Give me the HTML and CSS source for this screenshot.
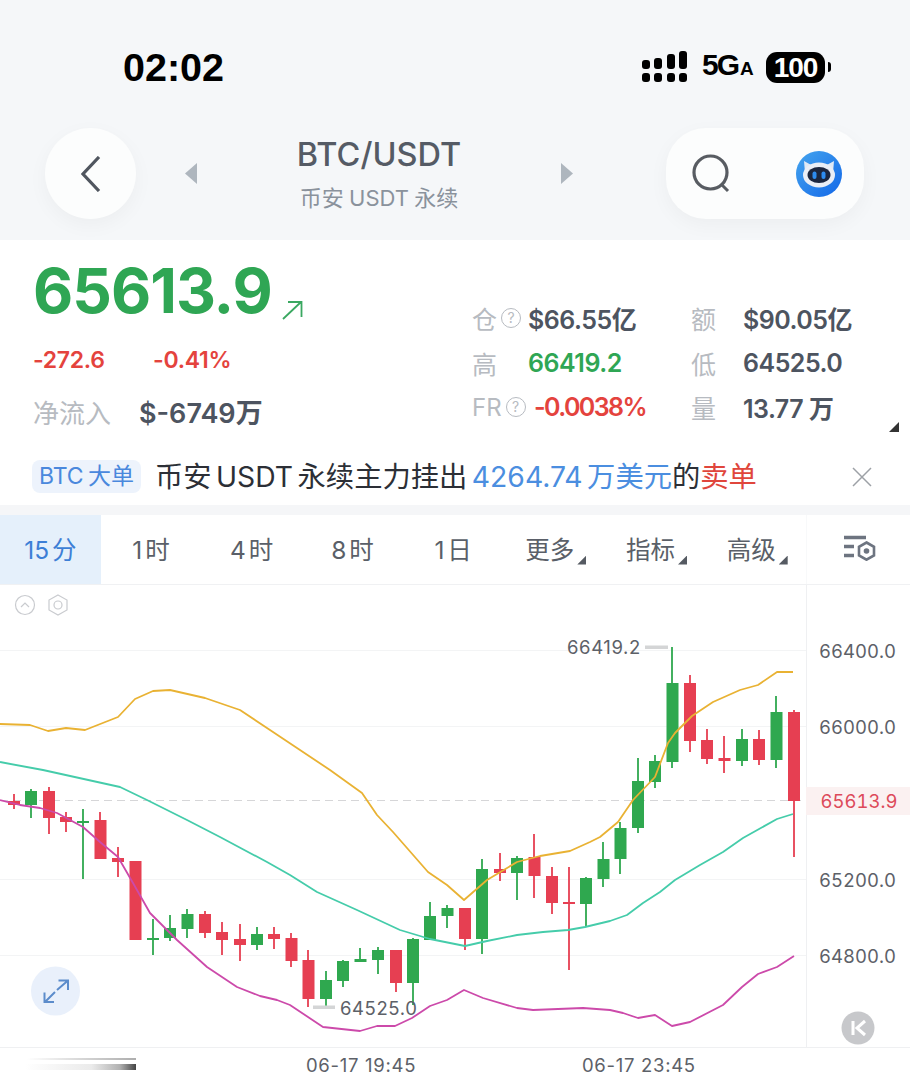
FILE: index.html
```html
<!DOCTYPE html>
<html lang="en">
<head>
    <meta charset="UTF-8">
    <meta name="viewport" content="width=device-width, initial-scale=1.0">
    <title>BTC/USDT</title>
    <link rel="stylesheet" href="styles.css">
</head>
<body>
    <header class="top">
        <div class="status">
            <span class="clock">02:02</span>
            <div class="status-right">
                <svg class="signal" width="46" height="32" viewBox="0 0 46 32">
                    <rect x="0" y="9" width="8" height="9" rx="3"/><rect x="12" y="7" width="8" height="11" rx="3"/><rect x="25" y="3" width="8" height="15" rx="3"/><rect x="37" y="0" width="8" height="18" rx="3"/>
                    <rect x="0" y="22" width="8" height="9" rx="3"/><rect x="12" y="22" width="8" height="9" rx="3"/><rect x="25" y="22" width="8" height="9" rx="3"/><rect x="37" y="22" width="8" height="9" rx="3"/>
                </svg>
                <span class="net">5G<small>A</small></span>
                <span class="battery">100</span>
                <span class="battery-nub"></span>
            </div>
        </div>
        <nav class="nav">
            <button class="round-btn">
                <svg width="20" height="36" viewBox="0 0 20 36"><path d="M18 1 2 18l16 17" fill="none" stroke="#50565f" stroke-width="3.200"/></svg>
            </button>
            <div class="pair">
                <span class="tri tri-left"></span>
                <div class="pair-name">
                    <div class="pair-title">BTC/USDT</div>
                    <div class="pair-sub">币安 USDT 永续</div>
                </div>
                <span class="tri tri-right"></span>
            </div>
            <div class="pill">
                <svg width="40" height="40" viewBox="0 0 40 40"><circle cx="18.5" cy="18.5" r="16.500" fill="none" stroke="#585c62" stroke-width="3.200"/><path d="M29 30l7 7" stroke="#585c62" stroke-width="3"/></svg>
                <svg width="46" height="46" viewBox="0 0 46 46">
                    <defs><linearGradient id="bot" x1="0" y1="0" x2="1" y2="1"><stop offset="0" stop-color="#45a5ee"/><stop offset="1" stop-color="#1267e8"/></linearGradient></defs>
                    <circle cx="23" cy="23" r="23" fill="url(#bot)"/>
                    <path d="M8 10l9 5h12l9-5-1 12H9z" fill="#dfe9f5"/>
                    <ellipse cx="23" cy="24" rx="16" ry="12.500" fill="#e9eef6"/>
                    <ellipse cx="23" cy="24" rx="11.500" ry="8" fill="#1c2740"/>
                    <rect x="16.500" y="20.500" width="4" height="7.500" rx="2" fill="#2d8cf0"/><rect x="25.500" y="20.500" width="4" height="7.500" rx="2" fill="#2d8cf0"/>
                </svg>
            </div>
        </nav>
    </header>

    <section class="quote">
        <div class="quote-left">
            <div class="price-row">
                <span class="price">65613.9</span>
                <svg class="price-arrow" width="21" height="20" viewBox="0 0 21 20"><path d="M1 19 19 2M6 2h13.500v15" fill="none" stroke="#3aa861" stroke-width="1.800"/></svg>
            </div>
            <div class="change"><span class="change-abs">-272.6</span><span>-0.41%</span></div>
            <div class="flow"><span class="flow-label">净流入</span><span class="flow-value">$-6749万</span></div>
        </div>
        <div class="stats">
            <span class="stat-label">仓<i class="help">?</i></span><span class="stat-value">$66.55亿</span>
            <span class="stat-label">额</span><span class="stat-value">$90.05亿</span>
            <span class="stat-label">高</span><span class="stat-value up">66419.2</span>
            <span class="stat-label">低</span><span class="stat-value">64525.0</span>
            <span class="stat-label fr">FR<i class="help">?</i></span><span class="stat-value down fr-value">-0.0038%</span>
            <span class="stat-label">量</span><span class="stat-value">13.77 万</span>
        </div>
        <span class="corner corner-quote"></span>
    </section>

    <div class="notice">
        <span class="notice-tag">BTC 大单</span>
        <p class="notice-text">币安 USDT 永续主力挂出 <em class="blue">4264.74 万美元</em>的<em class="red">卖单</em></p>
        <svg class="notice-close" width="22" height="22" viewBox="0 0 22 22"><path d="M2 2l18 18M20 2 2 20" stroke="#9da1a6" stroke-width="1.500"/></svg>
    </div>

    <div class="tabs">
        <span class="tab active">15 分</span>
        <span class="tab">1 时</span>
        <span class="tab">4 时</span>
        <span class="tab">8 时</span>
        <span class="tab">1 日</span>
        <span class="tab tab-menu">更多<span class="corner"></span></span>
        <span class="tab tab-menu">指标<span class="corner"></span></span>
        <span class="tab tab-menu">高级<span class="corner"></span></span>
        <span class="tab tab-icon">
            <svg width="32" height="26" viewBox="0 0 32 26">
                <path d="M0 2.500h22M0 11.500h10M0 20.500h10" stroke="#6d7480" stroke-width="3.400"/>
                <path d="M22.500 7.500l7.500 4.300v8.600l-7.500 4.300-7.500-4.300v-8.600z" fill="none" stroke="#6d7480" stroke-width="2.600"/>
                <circle cx="22.500" cy="16" r="2.800" fill="#6d7480"/>
            </svg>
        </span>
    </div>

    <svg class="chart" width="910" height="495" viewBox="0 585 910 495">
        <defs>
            <linearGradient id="smudge" x1="0" x2="1" y1="0" y2="0">
                <stop offset="0" stop-color="#555" stop-opacity="0"/>
                <stop offset="0.6" stop-color="#555" stop-opacity="0.12"/>
                <stop offset="0.85" stop-color="#555" stop-opacity="0.45"/>
                <stop offset="1" stop-color="#444"/>
            </linearGradient>
            <linearGradient id="smudge-thin" x1="0" x2="1" y1="0" y2="0">
                <stop offset="0" stop-color="#777" stop-opacity="0"/>
                <stop offset="1" stop-color="#777" stop-opacity="0.6"/>
            </linearGradient>
        </defs>

        <!-- grid -->
        <path d="M0 650.500H806M0 726.500H806M0 879.500H806M0 955.500H806" stroke="#f3f4f5" stroke-width="1"/>
        <path d="M806.500 585V1047M0 1047.500H910" stroke="#eff0f2" stroke-width="1"/>
        <path d="M0 800.500H806" stroke="#d6d6d8" stroke-width="1.200" stroke-dasharray="8 5"/>
        <rect x="806" y="787" width="104" height="28" fill="#fbf1f1"/>

        <!-- tools -->
        <g fill="none" stroke="#c9cbcf" stroke-width="1.200">
            <circle cx="25" cy="605" r="9.500"/><path d="M21 607l4-4 4 4"/>
            <path d="M58 595l9 5v10l-9 5-9-5v-10z"/><circle cx="58" cy="605" r="4"/>
        </g>

        <!-- falling candles -->
        <g class="candle-down">
            <path d="M14 794V809M49 787V834M66 812V832M100 812V820M118 847V877M205 911V938M222 922V955M240 924V961M274 927V949M291 933V967M308 950V1007M396 950V992M465 908V950M500 853V881M534 834V898M552 867V914M569 867V970M690 675V752M707 729V764M724 736V773M759 730V765M794 710V857"/>
            <rect x="8" y="801" width="12" height="4"/><rect x="43" y="791" width="12" height="27"/><rect x="60" y="817" width="12" height="5"/>
            <rect x="94.500" y="820" width="12" height="39"/><rect x="112" y="858" width="12" height="4"/><rect x="129.500" y="861" width="12" height="79"/>
            <rect x="199" y="914" width="12" height="19"/><rect x="216" y="932" width="12" height="8"/><rect x="234" y="939" width="12" height="6"/>
            <rect x="268" y="934" width="12" height="5"/><rect x="285.500" y="938" width="12" height="23"/><rect x="302.500" y="960" width="12" height="39"/>
            <rect x="390" y="950" width="12" height="33"/><rect x="459" y="908" width="12" height="31"/><rect x="494" y="869" width="12" height="4"/>
            <rect x="528.500" y="857" width="12" height="19"/><rect x="546" y="876" width="12" height="27"/><rect x="563" y="902" width="12" height="2"/>
            <rect x="684" y="683" width="12" height="58"/><rect x="701" y="740" width="12" height="19"/><rect x="718.500" y="758" width="12" height="3"/>
            <rect x="753" y="739" width="12" height="21"/><rect x="788" y="712" width="12" height="89"/>
        </g>

        <!-- rising candles -->
        <g class="candle-up">
            <path d="M31 789V818M83 809V879M153 919V955M170 915V941M187 909V938M257 927V950M326 971V1006M343 960V987M360 948V962M378 947V974M413 938V1005M430 902V940M447 905V928M482 859V954M517 856V900M586 877V927M603 842V887M620 822V874M638 758V833M655 755V788M672 647V768M742 729V766M776 696V768"/>
            <rect x="25" y="791" width="12" height="14"/><rect x="77" y="821" width="12" height="2"/><rect x="147" y="938" width="12" height="2"/>
            <rect x="164" y="928" width="12" height="10"/><rect x="181.500" y="914" width="12" height="15"/><rect x="251" y="934" width="12" height="11"/>
            <rect x="320" y="980" width="12" height="19"/><rect x="337" y="961" width="12" height="20"/><rect x="354.500" y="959" width="12" height="3"/>
            <rect x="372" y="950" width="12" height="10"/><rect x="407" y="939" width="12" height="44"/><rect x="424" y="916" width="12" height="24"/>
            <rect x="441.500" y="908" width="12" height="8"/><rect x="476" y="869" width="12" height="70"/><rect x="511" y="858" width="12" height="15"/>
            <rect x="580" y="878" width="12" height="26"/><rect x="597.500" y="859" width="12" height="20"/><rect x="614.500" y="828" width="12" height="31"/>
            <rect x="632" y="781" width="12" height="47"/><rect x="649" y="761" width="12" height="21"/><rect x="666.500" y="683" width="12" height="79"/>
            <rect x="736" y="739" width="12" height="22"/><rect x="770.500" y="712" width="12" height="48"/>
        </g>

        <!-- bands -->
        <g fill="none" stroke-width="1.800" stroke-linejoin="round">
            <polyline stroke="#e9b233" points="0,724 30,725 48,731 66,728 85,730 118,717 135,699 153,691 170,690 205,698 240,710 270,730 300,750 330,770 362,793 377,815 393,832 428,872 447,885 464,900 487,880 517,862 540,856 570,851 590,842 600,837 618,822 633,800 655,777 668,743 675,733 692,716 713,702 740,690 758,685 777,672 793,672"/>
            <polyline stroke="#45ccaa" points="0,762 43,770 120,787 147,800 187,820 220,837 267,862 290,875 317,892 357,910 400,930 430,939 465,946 487,941 517,935 543,932 568,930 585,927 610,921 627,915 643,903 660,892 675,880 700,865 723,852 743,838 777,819 793,814"/>
            <polyline stroke="#cc4aaa" points="0,800 20,805 40,808 57,813 83,827 100,842 118,857 133,883 150,913 177,940 207,967 237,987 260,996 277,1000 290,1005 323,1027 360,1031 377,1026 395,1026 412,1018 430,1006 447,1000 464,990 483,998 517,1008 533,1010 583,1008 610,1010 623,1013 638,1018 655,1015 672,1026 690,1022 723,1005 742,987 758,974 777,967 794,956"/>
        </g>

        <!-- high / low marks -->
        <rect x="645" y="645.500" width="23" height="3.500" fill="#d4d5d6"/>
        <rect x="313" y="1005.500" width="22" height="3.500" fill="#d4d5d6"/>
        <text class="axis-text mark-text" x="567" y="654">66419.2</text>
        <text class="axis-text mark-text" x="340" y="1015">64525.0</text>

        <!-- price axis -->
        <text class="axis-text" x="819" y="658">66400.0</text>
        <text class="axis-text" x="819" y="734">66000.0</text>
        <text class="axis-text axis-last" x="820.500" y="808">65613.9</text>
        <text class="axis-text" x="819" y="887">65200.0</text>
        <text class="axis-text" x="819" y="963">64800.0</text>

        <!-- time axis -->
        <rect x="25" y="1064" width="111" height="6" fill="url(#smudge)"/>
        <rect x="27" y="1058" width="109" height="2" fill="url(#smudge-thin)"/>
        <text class="axis-text time-text" x="306" y="1072">06-17 19:45</text>
        <text class="axis-text time-text" x="582" y="1072">06-17 23:45</text>

        <!-- expand -->
        <circle cx="55.500" cy="991" r="24.500" fill="#e9f0fb"/>
        <path d="M45 1002l10-10M57 990l11-9.500M58.500 980.500H68v9.500M44.500 992.500v9.500H54" fill="none" stroke="#5c8ccb" stroke-width="2"/>

        <!-- back to latest -->
        <circle cx="858" cy="1028" r="16.500" fill="#c7c8cb"/>
        <path d="M853 1021v14M865 1021l-8 7 8 7" fill="none" stroke="#fff" stroke-width="3"/>
    </svg>
</body>
</html>
```

FILE: styles.css
```css
* {
    box-sizing: border-box;
}

html, body {
    margin: 0;
    height: 1080px;
    overflow: hidden;
    background: #fff;
}

body {
    width: 910px;
    font-family: Inter, "Noto Sans CJK SC", sans-serif;
}

/* top bar */
.top {
    height: 240px;
    background: #f5f7f9;
}

.status {
    height: 88px;
    padding: 46px 79px 0 123px;
    display: flex;
    justify-content: space-between;
    align-items: center;
    color: #000;
}

.clock {
    font-family: "Liberation Sans", sans-serif;
    font-size: 39.500px;
    font-weight: 700;
    line-height: 42px;
}

.status-right {
    display: flex;
    align-items: center;
}

.signal {
    margin-right: 14px;
}

.net {
    font-family: "Liberation Sans", sans-serif;
    font-size: 30px;
    font-weight: 700;
    line-height: 32px;
    width: 64px;
    letter-spacing: -2px;
}

.net small {
    font-size: 19px;
    margin-left: 2px;
}

.battery {
    width: 59px;
    height: 31px;
    border-radius: 11px;
    background: #000;
    color: #fff;
    font-family: "Liberation Sans", sans-serif;
    font-size: 28px;
    font-weight: 700;
    line-height: 31px;
    text-align: center;
    letter-spacing: -1px;
}

.battery-nub {
    width: 3px;
    height: 10px;
    margin-left: 3px;
    background: #000;
    border-radius: 0 3px 3px 0;
}

.nav {
    margin-top: 40px;
    padding: 0 46px 0 45px;
    display: flex;
    align-items: center;
    height: 91px;
}

.round-btn {
    width: 91px;
    height: 91px;
    border: none;
    border-radius: 50%;
    background: #fcfdfd;
    box-shadow: 0 6px 20px rgba(0, 0, 0, 0.04);
    display: flex;
    align-items: center;
    justify-content: center;
    padding: 0;
}

.pair {
    width: 530px;
    padding: 0 93px 0 49px;
    display: flex;
    align-items: center;
    justify-content: space-between;
}

.pair-name {
    text-align: center;
}

.pair-title {
    font-size: 32.500px;
    font-weight: 500;
    line-height: 42px;
    color: #555b65;
}

.pair-sub {
    font-size: 22px;
    line-height: 30px;
    margin-top: 7px;
    word-spacing: -1px;
    color: #8a929c;
}

.tri {
    width: 12px;
    height: 21px;
    background: #aeb6be;
}

.tri-left {
    clip-path: polygon(100% 0, 100% 100%, 0 50%);
}

.tri-right {
    clip-path: polygon(0 0, 100% 50%, 0 100%);
}

.pill {
    flex: 1;
    height: 91px;
    border-radius: 40px;
    background: #fcfdfd;
    box-shadow: 0 6px 20px rgba(0, 0, 0, 0.04);
    padding: 0 22px 0 26px;
    display: flex;
    align-items: center;
    justify-content: space-between;
}

/* price block */
.quote {
    position: relative;
    height: 220px;
    display: flex;
}

.quote-left {
    width: 472px;
    padding: 16px 0 0 33px;
}

.price-row {
    display: flex;
    align-items: flex-end;
    height: 70px;
}

.price {
    font-size: 62px;
    font-weight: 700;
    line-height: 70px;
    letter-spacing: -1px;
    color: #2fa654;
}

.price-arrow {
    margin: 0 0 6px 10px;
}

.change {
    margin-top: 19px;
    font-size: 23px;
    font-weight: 600;
    line-height: 30px;
    letter-spacing: -0.3px;
    color: #e4433d;
    display: flex;
}

.change-abs {
    width: 120px;
}

.flow {
    margin-top: 21px;
    display: flex;
    align-items: center;
    line-height: 36px;
}

.flow-label {
    width: 106px;
    font-size: 26px;
    color: #b7bbc1;
}

.flow-value {
    font-size: 27px;
    font-weight: 600;
    color: #4d5460;
}

.stats {
    padding-top: 56px;
    display: grid;
    grid-template-columns: 56px 163px 52px auto;
    grid-auto-rows: 44.500px;
    align-items: center;
}

.stat-label {
    font-size: 25px;
    color: #b7bbc1;
    white-space: nowrap;
    display: flex;
    align-items: center;
}

.stat-label.fr {
    font-size: 24px;
}

.help {
    width: 20px;
    height: 20px;
    margin-left: 4px;
    border: 1.500px solid #b7bbc1;
    border-radius: 50%;
    font-size: 14px;
    font-style: normal;
    line-height: 17px;
    text-align: center;
}

.stat-value {
    font-size: 25px;
    font-weight: 600;
    letter-spacing: -0.5px;
    color: #4d5460;
    white-space: nowrap;
}

.stat-value.up {
    color: #2fa654;
}

.stat-value.down {
    color: #e4433d;
}

.fr-value {
    margin-left: 6px;
    letter-spacing: -1.600px;
}

.corner {
    display: inline-block;
    width: 9px;
    height: 9px;
    margin-left: 3px;
    background: #555a62;
    clip-path: polygon(100% 0, 100% 100%, 0 100%);
}

.corner-quote {
    position: absolute;
    right: 11px;
    top: 182px;
    width: 10px;
    height: 10px;
    background: #333;
}

/* notice */
.notice {
    height: 45px;
    padding: 0 37px 12px 32px;
    display: flex;
    align-items: center;
}

.notice-tag {
    width: 109px;
    height: 33px;
    margin-right: 14px;
    border-radius: 8px;
    background: #edf3fc;
    color: #4a88dd;
    font-size: 23px;
    line-height: 33px;
    text-align: center;
    white-space: nowrap;
    word-spacing: -2px;
}

.notice-text {
    flex: 1;
    margin: 0;
    font-size: 28.300px;
    line-height: 34px;
    word-spacing: -3.500px;
    color: #2c2f36;
    white-space: nowrap;
}

.notice-text em {
    font-style: normal;
}

.blue {
    color: #4b8ee0;
}

.red {
    color: #e0463c;
}

/* interval tabs */
.tabs {
    height: 80px;
    border-top: 10px solid #f5f6f8;
    border-bottom: 1px solid #f0f1f3;
    display: flex;
}

.tab {
    width: 100.700px;
    padding-bottom: 3px;
    display: flex;
    align-items: center;
    justify-content: center;
    font-size: 24.500px;
    word-spacing: -4px;
    color: #5a5f68;
    white-space: nowrap;
}

.tab-menu {
    padding-right: 8px;
}

.tab .corner {
    align-self: center;
    margin: 24px -12px 0 3px;
}

.tab.active {
    background: #e5f0fb;
    color: #3d7fd6;
}

.tab-icon {
    width: 104px;
    padding-left: 3px;
    border-left: 1px solid #f8f9fa;
}

/* chart */
.chart {
    display: block;
}

.candle-down path, .candle-up path {
    fill: none;
    stroke-width: 1.800;
}

.candle-down path {
    stroke: #e63f52;
}

.candle-down rect {
    fill: #e63f52;
}

.candle-up path {
    stroke: #2fa84f;
}

.candle-up rect {
    fill: #2fa84f;
}

.axis-text {
    font-family: Inter, sans-serif;
    font-size: 18.500px;
    font-variant-numeric: tabular-nums;
    fill: #5d6168;
}

.mark-text {
    font-variant-numeric: normal;
    letter-spacing: 0.6px;
}

.time-text {
    font-variant-numeric: normal;
    letter-spacing: 0.7px;
}

.axis-last {
    fill: #dd4a5a;
}
```
